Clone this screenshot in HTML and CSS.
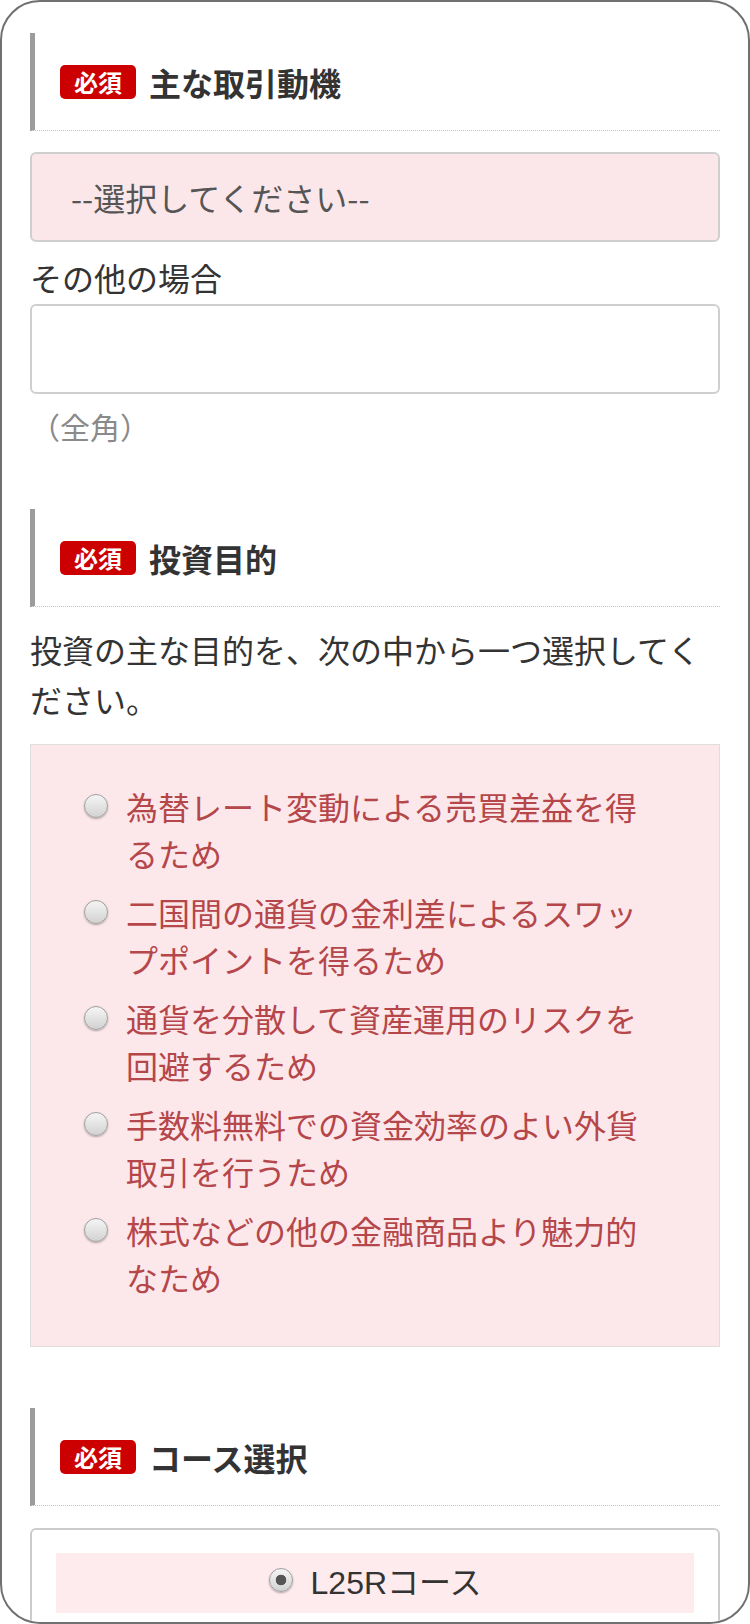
FILE: index.html
```html
<!DOCTYPE html>
<html lang="ja">
<head>
<meta charset="utf-8">
<title>フォーム</title>
<link rel="stylesheet" href="styles.css">
</head>
<body>
<div class="frame">
  <div class="heading">
    <span class="badge">必須</span>
    <span class="heading-title">主な取引動機</span>
  </div>
  <div class="select">--選択してください--</div>
  <div class="label">その他の場合</div>
  <div class="input"></div>
  <div class="note">（全角）</div>

  <div class="heading heading-gap">
    <span class="badge">必須</span>
    <span class="heading-title">投資目的</span>
  </div>
  <p class="lead">投資の主な目的を、次の中から一つ選択してください。</p>
  <ul class="radio-box">
    <li class="radio-item"><span class="radio"></span><span class="radio-text">為替レート変動による売買差益を得るため</span></li>
    <li class="radio-item"><span class="radio"></span><span class="radio-text">二国間の通貨の金利差によるスワップポイントを得るため</span></li>
    <li class="radio-item"><span class="radio"></span><span class="radio-text">通貨を分散して資産運用のリスクを回避するため</span></li>
    <li class="radio-item"><span class="radio"></span><span class="radio-text">手数料無料での資金効率のよい外貨取引を行うため</span></li>
    <li class="radio-item"><span class="radio"></span><span class="radio-text">株式などの他の金融商品より魅力的なため</span></li>
  </ul>

  <div class="heading heading-gap">
    <span class="badge">必須</span>
    <span class="heading-title">コース選択</span>
  </div>
  <div class="course-box">
    <div class="course-row">
      <span class="radio radio-checked"></span>
      <span class="course-text">L25Rコース</span>
    </div>
  </div>
</div>
</body>
</html>
```
FILE: styles.css
```css
html, body {
  margin: 0;
  padding: 0;
  background: #ffffff;
}

body {
  font-family: "Noto Sans CJK JP", "Liberation Sans", sans-serif;
  color: #333333;
}

.frame {
  box-sizing: border-box;
  width: 750px;
  height: 1624px;
  border: 2px solid #707070;
  border-radius: 40px;
  overflow: hidden;
  padding: 31px 28px 0 28px;
  background: #ffffff;
}

.heading {
  box-sizing: border-box;
  height: 98px;
  display: flex;
  align-items: center;
  gap: 13px;
  border-left: 5px solid #9c9c9c;
  border-bottom: 1px dotted #c4c4c4;
  padding-left: 25px;
}

.heading-gap {
  margin-top: 61px;
}

.badge {
  display: inline-block;
  height: 34px;
  line-height: 34px;
  padding: 0 14px;
  border-radius: 5px;
  background: #cc0000;
  color: #ffffff;
  font-size: 24px;
  font-weight: bold;
}

.heading-title {
  font-size: 32px;
  font-weight: bold;
  color: #333333;
  line-height: 40px;
}

.select {
  box-sizing: border-box;
  margin-top: 21px;
  height: 90px;
  border: 2px solid #cfcfcf;
  border-radius: 6px;
  background: #fbe7ea;
  display: flex;
  align-items: center;
  padding-left: 39px;
  font-size: 32px;
  color: #555555;
}

.label {
  margin-top: 13px;
  font-size: 32px;
  line-height: 44px;
  color: #333333;
}

.input {
  box-sizing: border-box;
  margin-top: 5px;
  height: 90px;
  border: 2px solid #cfcfcf;
  border-radius: 6px;
  background: #ffffff;
}

.note {
  margin-top: 10px;
  font-size: 30px;
  line-height: 44px;
  color: #8a8a8a;
}

.lead {
  margin: 17px 0 0 0;
  font-size: 32px;
  line-height: 50px;
  color: #333333;
}

.radio-box {
  list-style: none;
  margin: 20px 0 0 0;
  padding: 38px 60px 45px 53px;
  border: 1px solid #dedede;
  background: #fce8eb;
  display: flex;
  flex-direction: column;
  gap: 12px;
}

.radio-item {
  display: flex;
  align-items: flex-start;
  gap: 18px;
}

.radio {
  flex: none;
  box-sizing: border-box;
  width: 24px;
  height: 24px;
  margin-top: 11px;
  border-radius: 50%;
  border: 1px solid #a0a0a0;
  background: linear-gradient(#f5f5f5, #d2d2d2);
  box-shadow: 0 1px 2px rgba(0, 0, 0, 0.3);
}

.radio-text {
  font-size: 32px;
  line-height: 47px;
  color: #b5464a;
}

.course-box {
  box-sizing: border-box;
  margin-top: 22px;
  height: 200px;
  border: 2px solid #cccccc;
  border-radius: 6px;
  padding: 23px 24px;
  background: #ffffff;
}

.course-row {
  height: 60px;
  background: #fdebee;
  display: flex;
  align-items: center;
  justify-content: center;
  gap: 18px;
}

.radio-checked {
  width: 24px;
  height: 24px;
  margin-top: -6px;
  background: radial-gradient(circle, #555555 0, #555555 5px, transparent 5.6px), linear-gradient(#f5f5f5, #d2d2d2);
}

.course-text {
  font-family: "Liberation Sans", "Noto Sans CJK JP", sans-serif;
  font-size: 32px;
  color: #333333;
  line-height: 40px;
}
```
